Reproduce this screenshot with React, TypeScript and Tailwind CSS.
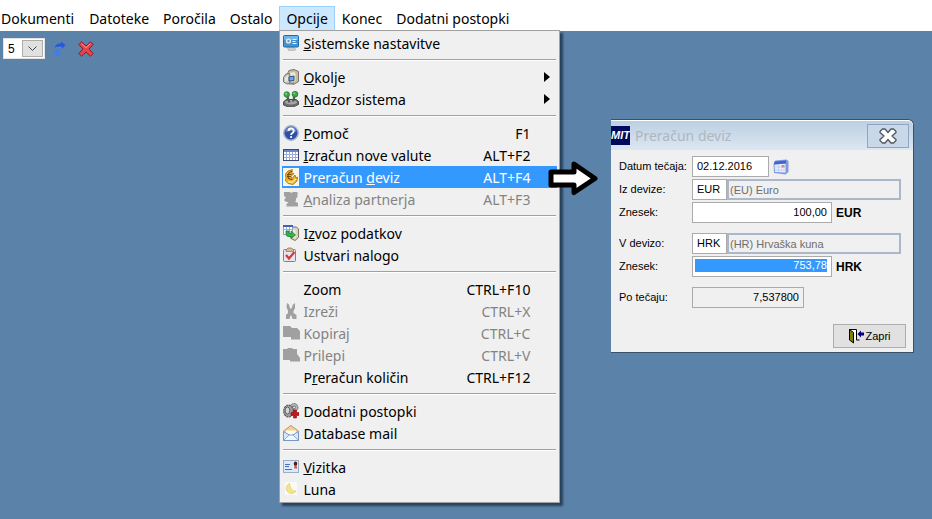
import type { ReactNode } from 'react';
import clsx from 'clsx';

type Entry = {
  label: ReactNode;
  icon?: ReactNode;
  shortcut?: string;
  submenu?: boolean;
  disabled?: boolean;
  active?: boolean;
};

const MonitorIcon = () => (
  <svg width="16" height="16" viewBox="0 0 16 16">
    <path d="M4 12h7l2 2.500-3 1.500H6l-1-2z" fill="#c9ccd0" stroke="#999da2" strokeWidth="0.5" />
    <rect x="0.5" y="0.500" width="15" height="11.500" rx="1" fill="#3f94d8" stroke="#2569a5" />
    <rect x="1" y="1" width="14" height="4" fill="#6cb5ea" />
    <circle cx="5.500" cy="6" r="2.600" fill="#f2ead2" />
    <circle cx="5.500" cy="6" r="1.200" fill="#4d9ddb" />
    <path d="M9.500 4.500h4M9.500 6.500h3M9.500 8.500h4" stroke="#e9f5ff" />
  </svg>
);

const EnvironmentIcon = () => (
  <svg width="16" height="16" viewBox="0 0 16 16">
    <path d="M5 3.500l1-2 5-1 4.500 2v10l-5 3-5-2z" fill="#c9bc98" stroke="#77736a" />
    <path d="M6.500 4l5-1 1 2v7l-6 1z" fill="#ece7d8" />
    <path d="M0.500 8.500L3 5l3.500-.5.500 3v6.500l-3 1-3.500-2z" fill="#c8c6ba" stroke="#77756e" />
    <path d="M2 9l3-3v6l-3 1z" fill="#e8e6df" />
    <path d="M6 8l5-1v4.500L6 12z" fill="#6da5ea" stroke="#2c4f91" />
    <path d="M5 14.500l6-1v1.500l-5 .8z" fill="#8a8a85" />
  </svg>
);

const JoystickIcon = () => (
  <svg width="16" height="16" viewBox="0 0 16 16">
    <path d="M0.500 11l2.500-2.500h10l2.500 2v3l-5 2.300H5L.5 14z" fill="#6d6d6d" stroke="#4d4d4d" />
    <ellipse cx="8" cy="11.200" rx="6" ry="2.200" fill="#a5a5a5" />
    <path d="M4 4.500l2.500 7M12 3.500l-2 7" stroke="#555" strokeWidth="2.200" />
    <circle cx="3.800" cy="3.500" r="2.800" fill="#38a745" stroke="#23702c" strokeWidth="0.7" />
    <circle cx="12" cy="3.200" r="2.900" fill="#38a745" stroke="#23702c" strokeWidth="0.7" />
    <circle cx="3" cy="2.700" r="0.9" fill="#93e39b" />
    <circle cx="11.300" cy="2.300" r="0.9" fill="#93e39b" />
  </svg>
);

const HelpIcon = () => (
  <svg width="16" height="16" viewBox="0 0 16 16">
    <circle cx="8" cy="8" r="7.200" fill="#3050a8" stroke="#a5afc9" strokeWidth="1.400" />
    <path d="M2.500 7a5.500 5 0 0 1 11 0q-5.500-2-11 0" fill="#6c89d2" />
    <path
      d="M5.500 6q0-2.500 2.600-2.500T10.700 6q0 1.300-1.400 2-1.200.6-1.200 2"
      fill="none"
      stroke="#fff"
      strokeWidth="1.800"
    />
    <circle cx="8.100" cy="12" r="1.100" fill="#fff" />
  </svg>
);

const TableIcon = () => (
  <svg width="16" height="16" viewBox="0 0 16 16">
    <rect x="0.500" y="2.500" width="15" height="11" fill="#fff" stroke="#3d4875" />
    <rect x="1" y="3" width="14" height="2" fill="#6c87c4" />
    <path d="M1 7.500h14M1 10.500h14M3.500 5v8M6.500 5v8M9.500 5v8M12.500 5v8" stroke="#9aadd6" />
  </svg>
);

const CoinIcon = () => (
  <svg width="16" height="18" viewBox="0 0 16 18">
    <rect width="16" height="18" fill="#fbf7ea" />
    <path
      d="M9.500 1.500L5 3 2.500 6l.5 5-1 1 3 3.500 5 1 4-3.500.5-4-1.500 1-1-3-3 3.500-1-2 3-3-3-.5z"
      fill="#f0b42f"
      stroke="#b27413"
      strokeWidth="0.900"
      strokeLinejoin="round"
    />
    <path d="M9.500 3.500q-4 0-4.500 4t4.500 4" fill="none" stroke="#7c4b08" strokeWidth="1.200" />
    <path d="M4 6.500h4.500M4 8.500h4" stroke="#7c4b08" />
    <path d="M5 13.500l4 1 4-3.500" fill="none" stroke="#ffe690" strokeWidth="1.300" />
  </svg>
);

const PartnerIcon = () => (
  <svg width="16" height="16" viewBox="0 0 16 16" fill="#a0a0a0">
    <path d="M1 1h6l1 1 2-1h4.500v5L13 7.500v2l-1 1 3 1.500v3.500H3.500V13l2-1.500-4-1.500V8L3 7 1 4.500z" />
  </svg>
);

const ExportIcon = () => (
  <svg width="16" height="16" viewBox="0 0 16 16">
    <path d="M8 2l5.500 0 2 2v8.500L12 15.500l-4-2z" fill="#d9d4bb" stroke="#78745f" />
    <path d="M9 4l3.500 1v8L9 12z" fill="#efecdf" />
    <rect x="0.500" y="0.500" width="9" height="9" fill="#fff" stroke="#8fa0ca" />
    <path d="M0 1h10" stroke="#3e63b7" strokeWidth="2" />
    <path d="M1 4.500h8M3.500 2v6M6.500 2v6" stroke="#9cb0d9" />
    <path d="M3 6h3v2.500h2V6l4.500 4L8 13.500V11.500H5Q3 11 3 9z" fill="#31b640" stroke="#147325" strokeWidth="0.700" />
  </svg>
);

const TaskIcon = () => (
  <svg width="16" height="16" viewBox="0 0 16 16">
    <rect x="0.500" y="2.500" width="12" height="12" rx="1" fill="#e3e6f5" stroke="#837e98" />
    <path d="M3 4.500V3l2-2h3.500l2 2v1.500z" fill="#d9b89a" stroke="#8b714a" strokeWidth="0.700" />
    <path d="M3 8l3 3.500L11.500 5" fill="none" stroke="#d13a33" strokeWidth="2.200" />
  </svg>
);

const CutIcon = () => (
  <svg width="16" height="16" viewBox="0 0 16 16" fill="#a0a0a0">
    <path d="M4 0l2 1.500 1 4h1.500l1.500-4L12 0v5L10.500 8v2l3 2v4H9.500L8.500 12.500h-1L6.500 16H3v-4l2-2V8L3.500 4z" />
  </svg>
);

const CopyIcon = () => (
  <svg width="17" height="16" viewBox="0 0 17 16" fill="#a0a0a0">
    <path d="M0 1h7l2 2h5l3 3v8.500H8V12H0z" />
  </svg>
);

const PasteIcon = () => (
  <svg width="17" height="16" viewBox="0 0 17 16" fill="#a0a0a0">
    <path d="M0 2h4l1-1h4l1 1h4v5l3 4v3.500H7V13H0z" />
  </svg>
);

const GearsIcon = () => (
  <svg width="16" height="16" viewBox="0 0 16 16">
    <circle cx="11" cy="4.500" r="4" fill="#b5b5b5" stroke="#757575" strokeDasharray="2 .6" />
    <circle cx="11" cy="4.500" r="1.500" fill="#ddd" stroke="#777" />
    <ellipse cx="5.500" cy="8" rx="4.800" ry="6" fill="#9d9d9d" stroke="#5b5b5b" strokeWidth="1.200" strokeDasharray="2.200 .6" />
    <ellipse cx="4.500" cy="7.500" rx="2.300" ry="3.500" fill="#d5d5d5" stroke="#666" />
    <path d="M10.500 7h3v2.500H16v3h-2.500V15h-3v-2.500H8v-3h2.500z" fill="#c8171c" stroke="#811013" strokeWidth="0.600" />
  </svg>
);

const MailIcon = () => (
  <svg width="16" height="16" viewBox="0 0 16 16">
    <path d="M0.500 6L8 0.500 15.500 6v9.500H.5z" fill="#f5d08c" stroke="#b19a77" />
    <path d="M3 5.500h10V11H3z" fill="#fffaf0" />
    <path d="M0.500 6.500L8 11l7.500-4.500v9H.5z" fill="#d7e8fb" stroke="#7797c2" />
    <path d="M1 15l5-5h4l5 5" fill="#eef6ff" stroke="#8eaad0" />
  </svg>
);

const CardIcon = () => (
  <svg width="16" height="16" viewBox="0 0 16 16">
    <rect x="0.500" y="1.500" width="15" height="12" fill="#dbe8f8" stroke="#9badc8" />
    <path d="M2 5.500h5M2 7.500h4M2 10.500h7" stroke="#4773ba" />
    <rect x="10" y="2.500" width="5" height="7" fill="#f7f4ef" />
    <ellipse cx="12.500" cy="4.800" rx="1.800" ry="2.200" fill="#4e241c" />
    <path d="M11 9.500q0-3 1.500-3t2 3z" fill="#c65b4c" />
  </svg>
);

const MoonIcon = () => (
  <svg width="16" height="16" viewBox="0 0 16 16">
    <rect x="2" y="1" width="12" height="13" fill="#f9f9f5" />
    <path
      d="M6.500 2.500a5.200 5.200 0 1 0 6.500 7.500Q7.500 11 6.500 2.500z"
      fill="#f5e48c"
      stroke="#dcc456"
      strokeWidth="0.600"
    />
  </svg>
);

const RefreshIcon = () => (
  <svg width="16" height="16" viewBox="0 0 16 16">
    <path d="M2.500 6.500Q4 2 9 2.500V.5L13.500 4 10 8V5.800Q6 5 2.500 6.500z" fill="#2458e0" />
    <path d="M2.500 10l3-1.500 3 2-1 1.500 1 2-3.500 1q-3-1-2.500-5z" fill="#3f7bf4" />
  </svg>
);

const DeleteIcon = () => (
  <svg width="16" height="16" viewBox="0 0 16 16">
    <path
      d="M3.500.8L8 5l4.500-4.200L15.200 3.500 11 8l4.200 4.500-2.700 2.700L8 11l-4.500 4.200L.8 12.500 5 8 .8 3.500z"
      fill="#e4474b"
      stroke="#8d1c25"
      strokeLinejoin="round"
    />
    <path d="M3.500 2.500L8 6.700 12.500 2.500" fill="none" stroke="#fa9a97" />
  </svg>
);

const CalendarIcon = () => (
  <svg width="16" height="16" viewBox="0 0 16 16">
    <path d="M2.500 1.500L13.500 .5l2 1.500v11L12.500 15.500 1 14 .5 5z" fill="#7f9be0" />
    <path d="M1.500 5.500l11-1v9l-10.500-.5z" fill="#e6edfc" />
    <path d="M1.500 2.500l11.500-1V4.500l-12 1z" fill="#4265ca" />
    <path d="M2 8h10M2 11h10M5.500 6v7" stroke="#c3d0ee" />
    <rect x="8.500" y="6" width="3" height="2.500" fill="#d98a98" />
  </svg>
);

const DoorIcon = () => (
  <svg width="17" height="16" viewBox="0 0 17 16">
    <path d="M1.500 12V1.500h7V12h3" fill="#fff" stroke="#000" />
    <path d="M1.500 1.500l4 3v10.500l-4-3z" fill="#808000" stroke="#000" />
    <path d="M9.500 6L13 2.500v2h3v3h-3v2z" fill="#000080" />
  </svg>
);

const groups: Entry[][] = [
  [{ label: <><u>S</u>istemske nastavitve</>, icon: <MonitorIcon /> }],
  [
    { label: <><u>O</u>kolje</>, icon: <EnvironmentIcon />, submenu: true },
    { label: <><u>N</u>adzor sistema</>, icon: <JoystickIcon />, submenu: true },
  ],
  [
    { label: <><u>P</u>omoč</>, icon: <HelpIcon />, shortcut: 'F1' },
    { label: <><u>I</u>zračun nove valute</>, icon: <TableIcon />, shortcut: 'ALT+F2' },
    { label: <>Preračun <u>d</u>eviz</>, icon: <CoinIcon />, shortcut: 'ALT+F4', active: true },
    { label: <><u>A</u>naliza partnerja</>, icon: <PartnerIcon />, shortcut: 'ALT+F3', disabled: true },
  ],
  [
    { label: <>I<u>z</u>voz podatkov</>, icon: <ExportIcon /> },
    { label: 'Ustvari nalogo', icon: <TaskIcon /> },
  ],
  [
    { label: 'Zoom', shortcut: 'CTRL+F10' },
    { label: 'Izreži', icon: <CutIcon />, shortcut: 'CTRL+X', disabled: true },
    { label: 'Kopiraj', icon: <CopyIcon />, shortcut: 'CTRL+C', disabled: true },
    { label: 'Prilepi', icon: <PasteIcon />, shortcut: 'CTRL+V', disabled: true },
    { label: <>P<u>r</u>eračun količin</>, shortcut: 'CTRL+F12' },
  ],
  [
    { label: 'Dodatni postopki', icon: <GearsIcon /> },
    { label: 'Database mail', icon: <MailIcon /> },
  ],
  [
    { label: <><u>V</u>izitka</>, icon: <CardIcon /> },
    { label: 'Luna', icon: <MoonIcon /> },
  ],
];

const MenuEntry = ({ entry }: { entry: Entry }) => (
  <button
    type="button"
    disabled={entry.disabled}
    className={clsx(
      'flex h-[22px] w-full items-center pl-px text-left whitespace-nowrap',
      entry.active && 'bg-[#3399ff] text-white',
      entry.disabled && 'text-[#838383]',
    )}
  >
    <span className="w-5 shrink-0">{entry.icon}</span>
    <span className="flex-1">{entry.label}</span>
    <span>{entry.shortcut}</span>
    <span className="flex w-[27px] shrink-0 justify-end pr-[7px]">
      {entry.submenu && (
        <svg width="6" height="10" viewBox="0 0 6 10">
          <path d="M0 0l6 5-6 5z" />
        </svg>
      )}
    </span>
  </button>
);

const OptionsMenu = () => (
  <div className="absolute top-full left-0 z-10 w-[281px] border border-[#a0a0a0] bg-[#f0f0f0] px-0.5 pt-px pb-0.5 text-black shadow-[3px_3px_2px_rgba(15,30,50,0.65)]">
    {groups.map((group, index) => (
      <div key={index}>
        {index > 0 && (
          <div className="flex h-3 items-center px-px">
            <hr className="h-0.5 flex-1 border-t border-b border-t-[#a0a0a0] border-b-white" />
          </div>
        )}
        {group.map((entry, i) => (
          <MenuEntry key={i} entry={entry} />
        ))}
      </div>
    ))}
  </div>
);

const menus = ['Dokumenti', 'Datoteke', 'Poročila', 'Ostalo', 'Opcije', 'Konec', 'Dodatni postopki'];

const MenuBar = () => (
  <nav className="flex h-[31px] items-end bg-white pb-px font-['Noto_Sans'] text-[14px]">
    {menus.map((name, index) => (
      <div key={name} className="relative">
        <button
          type="button"
          className={clsx(
            'block h-6 border-x border-t pb-px whitespace-nowrap',
            index === 0 ? 'pr-[7px]' : 'px-[6px]',
            name === 'Opcije' ? 'border-[#99d1ff] bg-[#cce8ff]' : 'border-transparent',
          )}
        >
          {name}
        </button>
        {name === 'Opcije' && <OptionsMenu />}
      </div>
    ))}
  </nav>
);

const Toolbar = () => (
  <div className="flex items-center px-[3px] py-[7px] font-['Liberation_Sans'] text-xs">
    <div className="relative">
      <select
        aria-label="Število"
        defaultValue="5"
        className="block h-[21px] w-[42px] appearance-none border border-[#e3e3e3] bg-white pl-1"
      >
        <option>5</option>
        <option>10</option>
      </select>
      <span className="pointer-events-none absolute top-0.5 right-0.5 flex h-[17px] w-[21px] items-center justify-center border border-[#adadad] bg-[#e1e1e1]">
        <svg width="9" height="6" viewBox="0 0 9 6">
          <path d="M0.500 0.500l4 4 4-4" fill="none" stroke="#444" />
        </svg>
      </span>
    </div>
    <button type="button" aria-label="Osveži" className="ml-[7px]">
      <RefreshIcon />
    </button>
    <button type="button" aria-label="Izbriši" className="ml-[10px]">
      <DeleteIcon />
    </button>
  </div>
);

type RowProps = { id: string; label: string; children: ReactNode };

const Row = ({ id, label, children }: RowProps) => (
  <div className="flex h-[21px] items-center">
    <label htmlFor={id} className="w-[73px] shrink-0 whitespace-nowrap">
      {label}
    </label>
    {children}
  </div>
);

const field = 'h-[21px] border border-[#ababab] bg-white px-1 pb-0.5';
const readOnlyName = 'h-[21px] min-w-0 flex-1 border-2 border-[#abb8c9] bg-[#f0f0f0] px-px text-[#6d6d6d]';

const Dialog = () => (
  <section className="absolute top-[119px] left-[611px] w-[303px] rounded-tr-md border-t border-r border-b border-[#3b4f66] bg-[#f0f0f0] font-['Liberation_Sans'] text-[11px] text-black">
    <header className="flex h-[30px] items-center rounded-tr-md border-t border-white bg-linear-to-b from-[#bccfe2] to-[#dce7f2] pr-1">
      <span className="flex h-[19px] w-[19px] items-center justify-center overflow-hidden bg-[#000a5c] text-[11px] font-bold text-white italic">
        MIT
      </span>
      <h1 className="flex-1 pl-[5px] font-['Noto_Sans'] text-[14px] text-[#adb7c1]">Preračun deviz</h1>
      <button
        type="button"
        aria-label="Zapri okno"
        className="flex h-6 w-[42px] items-center justify-center border border-[#8ea5c3] bg-[#c8d8e8]"
      >
        <svg width="18" height="16" viewBox="0 0 18 16">
          <path
            d="M3.500 1h2.500L9 4.500 12 1h2.500L17 3.500v1L13 8l4 3.500v1L14.500 15H12L9 11.500 6 15H3.500L1 12.500v-1L5 8 1 4.500v-1z"
            fill="#fff"
            stroke="#4f5561"
            strokeWidth="1.300"
            strokeLinejoin="round"
          />
        </svg>
      </button>
    </header>
    <form className="pt-[6px] pr-3 pb-1 pl-2">
      <div className="flex flex-col gap-0.5">
        <Row id="date" label="Datum tečaja:">
          <input id="date" defaultValue="02.12.2016" className={clsx(field, 'w-[77px]')} />
          <button type="button" aria-label="Koledar" className="ml-1">
            <CalendarIcon />
          </button>
        </Row>
        <Row id="from" label="Iz devize:">
          <input id="from" defaultValue="EUR" className={clsx(field, 'w-[35px]')} />
          <input aria-label="Naziv devize" readOnly value="(EU) Euro" className={readOnlyName} />
        </Row>
        <Row id="from-amount" label="Znesek:">
          <input id="from-amount" defaultValue="100,00" className={clsx(field, 'w-[140px] text-right')} />
          <span className="pl-1 text-xs font-bold">EUR</span>
        </Row>
      </div>
      <div className="mt-[10px] flex flex-col gap-0.5">
        <Row id="to" label="V devizo:">
          <input id="to" defaultValue="HRK" className={clsx(field, 'w-[35px]')} />
          <input aria-label="Naziv ciljne devize" readOnly value="(HR) Hrvaška kuna" className={readOnlyName} />
        </Row>
        <Row id="to-amount" label="Znesek:">
          <div className="h-[21px] w-[140px] border border-[#ababab] bg-white pt-0.5 pr-1 pl-0.5">
            <input
              id="to-amount"
              defaultValue="753,78"
              className="block h-[13px] w-full bg-[#3399ff] text-right text-white"
            />
          </div>
          <span className="pl-1 text-xs font-bold">HRK</span>
        </Row>
      </div>
      <div className="mt-[10px]">
        <Row id="rate" label="Po tečaju:">
          <input
            id="rate"
            readOnly
            value="7,537800"
            className="h-[21px] w-[112px] border border-[#ababab] bg-[#f0f0f0] px-1 pb-0.5 text-right"
          />
        </Row>
      </div>
      <div className="mt-4 -mr-[5px] flex justify-end">
        <button
          type="button"
          className="flex h-6 w-[73px] items-center justify-center border border-[#adadad] bg-[#e1e1e1]"
        >
          <DoorIcon />
          Zapri
        </button>
      </div>
    </form>
  </section>
);

// Points from the highlighted menu entry to the window it opens
const Pointer = () => (
  <svg
    className="absolute top-[159px] left-[548px] z-20"
    width="52"
    height="38"
    viewBox="0 0 52 38"
  >
    <path
      d="M3 13H26V5L47 19.500 26 33.500V26H3z"
      fill="#fff"
      stroke="#000"
      strokeWidth="5"
      strokeLinejoin="round"
    />
  </svg>
);

const App = () => (
  <div className="relative min-h-screen overflow-hidden bg-[#5b83a9]">
    <MenuBar />
    <Toolbar />
    <Dialog />
    <Pointer />
  </div>
);

export default App;
